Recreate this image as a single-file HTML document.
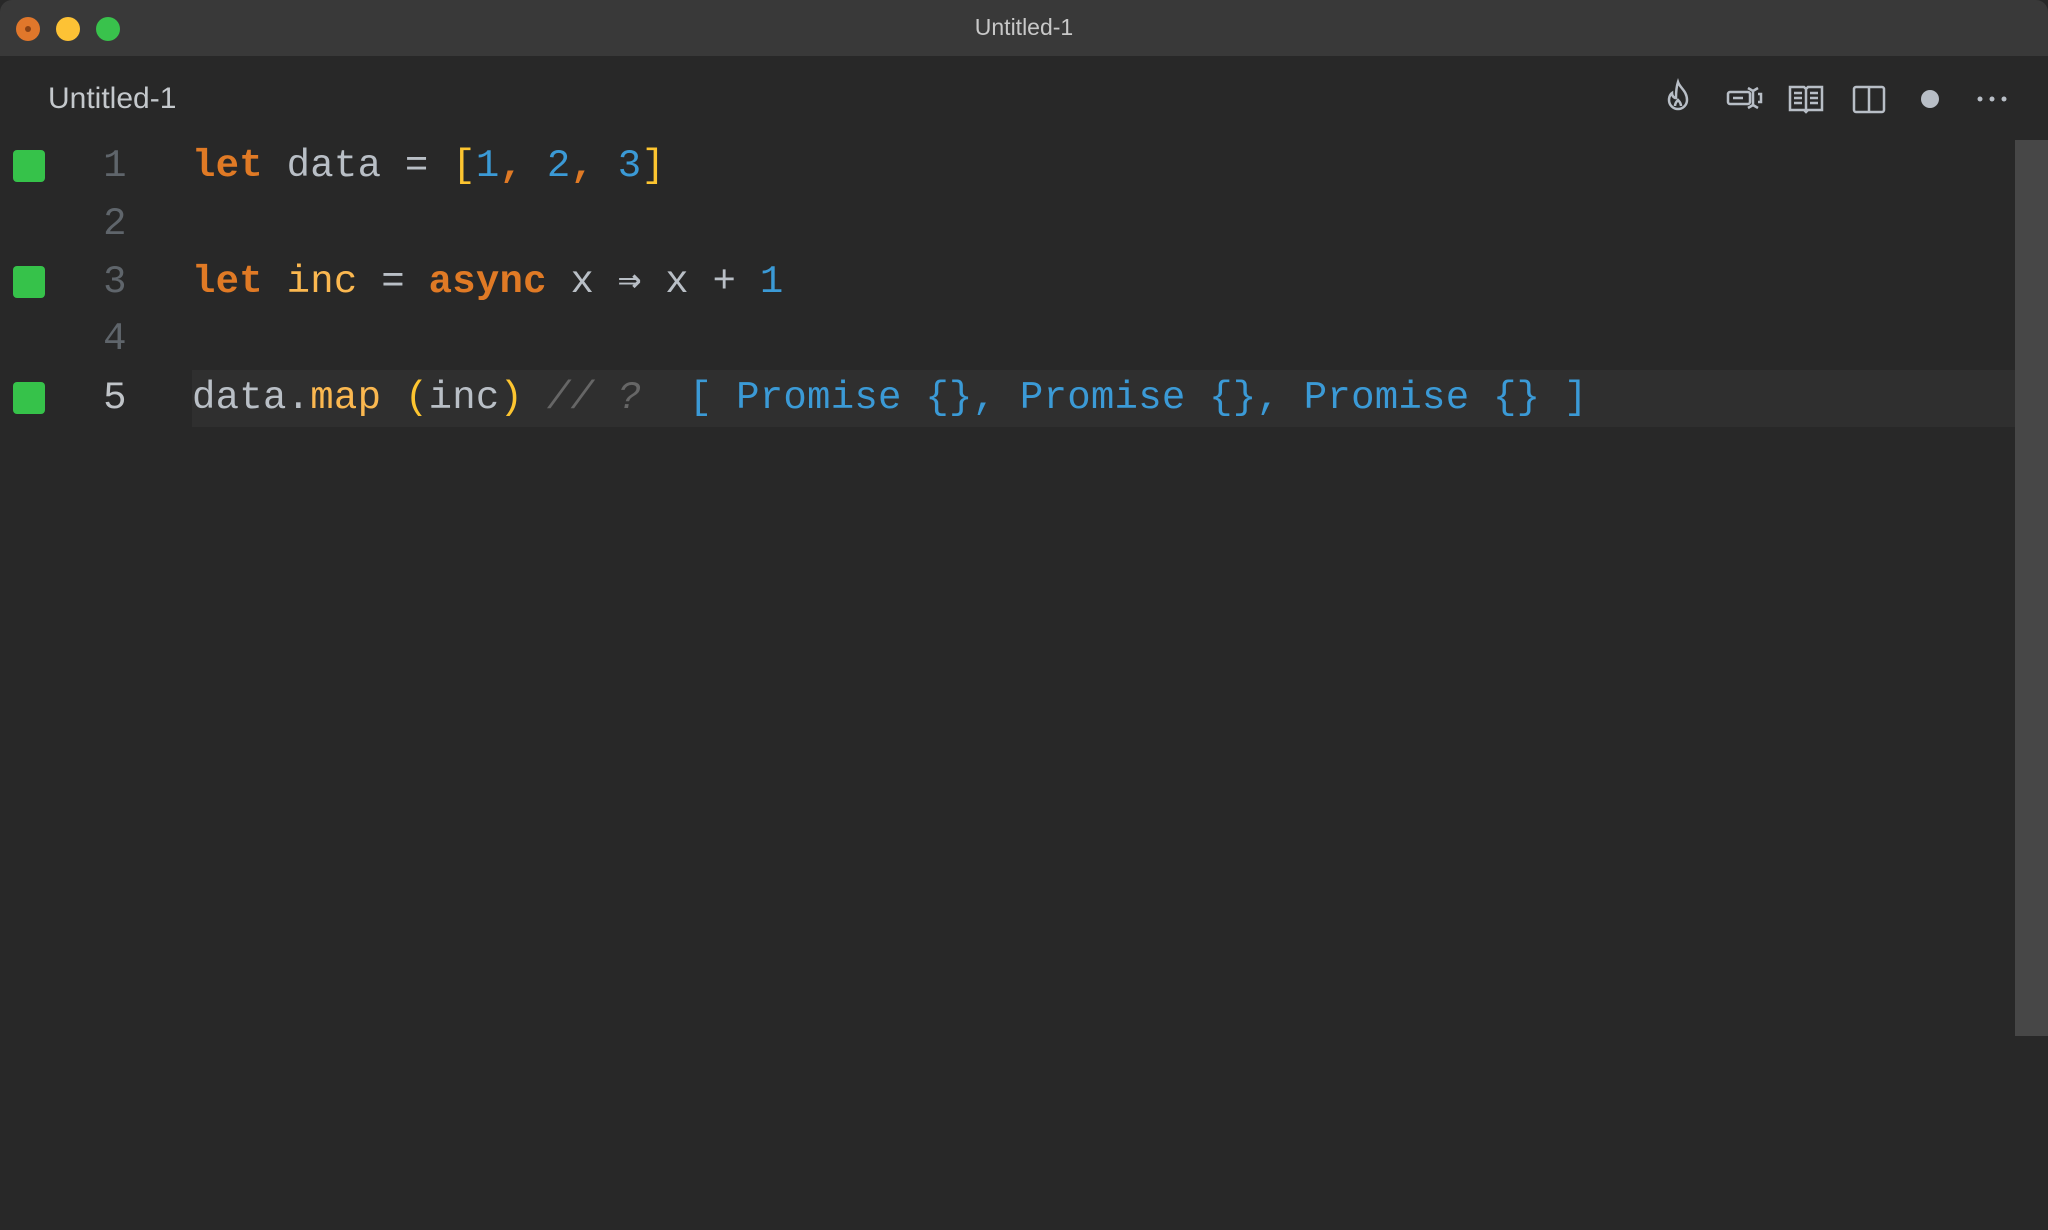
<!DOCTYPE html>
<html><head><style>
body{margin:0;width:2048px;height:1230px;background:#282828;overflow:hidden;position:relative;font-family:"Liberation Sans",sans-serif}
.tb{position:absolute;left:0;top:0;width:2048px;height:56px;background:#393939;border-radius:12px 12px 0 0}
.tb .t{position:absolute;left:0;width:2048px;top:14px;text-align:center;color:#c8c8c8;font-size:23px}
.dot{position:absolute;top:17px;width:24px;height:24px;border-radius:50%}
.tab{position:absolute;left:48px;top:82px;color:#c4c8cc;font-size:30px}
.ln{position:absolute;left:0;height:57px;width:2015px;font-family:"Liberation Mono",monospace;font-size:39px;line-height:57px;white-space:pre;letter-spacing:0.25px}
.sq{position:absolute;left:13px;top:12px;width:32px;height:32px;background:#36c24a;border-radius:4px}
.num{position:absolute;left:100px;width:30px;text-align:center;color:#5f656b}
.code{position:absolute;left:192px;color:#b9bfc6}
.k{color:#e07a25;font-weight:bold}.y{color:#fdc530}.b{color:#3b9ad6}.f{color:#fbb850}.c{color:#666;font-style:italic}
.hl{position:absolute;left:192px;top:370px;width:1823px;height:57px;background:#2f2f2f}
.sb{position:absolute;left:2015px;top:140px;width:33px;height:896px;background:#474747}
svg{position:absolute}
</style></head><body>
<div class="tb"><div class="t">Untitled-1</div>
<div class="dot" style="left:16px;background:#e0772b"><div style="position:absolute;left:9px;top:9px;width:6px;height:6px;border-radius:50%;background:#8a4215"></div></div>
<div class="dot" style="left:56px;background:#fdc235"></div>
<div class="dot" style="left:96px;background:#39c24c"></div></div>
<div class="tab">Untitled-1</div>
<svg style="left:1660px;top:78px" width="380" height="44" fill="none" stroke="#b8bec6" stroke-width="2.5">
<path d="M18 4c2 6 9 9 9 18a9 9 0 0 1-18 0c0-5 3-7 3-7 0 3 2 5 4 5 0-5 0-10 2-16z M15 28c0-3 3-6 3-6s3 3 3 6"/>
<rect x="68" y="14" width="22" height="12" rx="2"/><path d="M73 20h10M93 12v16M88 10l5 3 5-3M88 30l5-3 5 3M98 16h3v8h-3"/>
<path d="M130 9h14l2 2 2-2h14v23h-14l-2 2-2-2h-14zM146 11v21M134 15h8M134 20h8M134 25h8M150 15h8M150 20h8M150 25h8"/>
<rect x="194" y="9" width="30" height="25" rx="2"/><path d="M209 9v25"/>
<circle cx="270" cy="21" r="9" fill="#b8bec6" stroke="none"/>
<circle cx="320" cy="21" r="2.5" fill="#b8bec6" stroke="none"/><circle cx="332" cy="21" r="2.5" fill="#b8bec6" stroke="none"/><circle cx="344" cy="21" r="2.5" fill="#b8bec6" stroke="none"/>
</svg>
<div class="hl"></div>
<div class="sb"></div>
<div class="ln" style="top:138px"><div class="sq"></div><span class="num">1</span><span class="code"><span class="k">let</span> data = <span class="y">[</span><span class="b">1</span><span class="k">,</span> <span class="b">2</span><span class="k">,</span> <span class="b">3</span><span class="y">]</span></span></div>
<div class="ln" style="top:196px"><span class="num">2</span></div>
<div class="ln" style="top:254px"><div class="sq"></div><span class="num">3</span><span class="code"><span class="k">let</span> <span class="f">inc</span> = <span class="k">async</span> x <b>⇒</b> x + <span class="b">1</span></span></div>
<div class="ln" style="top:311px"><span class="num">4</span></div>
<div class="ln" style="top:370px"><div class="sq"></div><span class="num" style="color:#c0c4c8">5</span><span class="code">data.<span class="f">map</span> <span class="y">(</span>inc<span class="y">)</span> <span class="c">// ?</span>  <span class="b">[ Promise {}, Promise {}, Promise {} ]</span></span></div>
</body></html>
